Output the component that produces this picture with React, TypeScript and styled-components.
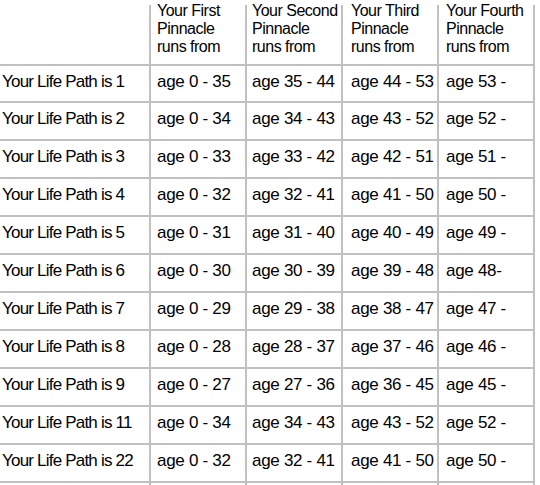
import React from "react";
import styled, { createGlobalStyle } from "styled-components";

const Global = createGlobalStyle`
  html, body {
    margin: 0;
    padding: 0;
    background: #ffffff;
    overflow: hidden;
  }
  body {
    font-family: "Liberation Sans", Arial, sans-serif;
    color: #000;
  }
`;

const LINE = "#c0c0c0";

const Page = styled.div`
  width: 540px;
  height: 485px;
  overflow: hidden;
  padding-top: 5px;
  box-sizing: border-box;
`;

const Row = styled.div<{ $h: number }>`
  display: grid;
  grid-template-columns: 151px repeat(4, 96px);
  height: ${(p) => p.$h}px;
`;

const Cell = styled.div<{ $pad?: number; $noBottom?: boolean }>`
  box-sizing: border-box;
  border-right: 2px solid ${LINE};
  border-bottom: ${(p) => (p.$noBottom ? "none" : `2px solid ${LINE}`)};
  display: flex;
  align-items: center;
  padding-left: ${(p) => p.$pad ?? 6}px;
  padding-bottom: 4px;
  white-space: nowrap;
  overflow: visible;
`;

const HeadCell = styled(Cell)`
  align-items: flex-start;
  padding-bottom: 0;
`;

const HeadText = styled.div`
  margin-top: -3px;
  font-size: 16px;
  line-height: 18px;
  letter-spacing: -0.5px;
`;

const LabelCell = styled(Cell)`
  font-size: 17px;
  letter-spacing: -0.8px;
`;

const AgeCell = styled(Cell)`
  font-size: 17px;
  letter-spacing: -0.3px;
`;

const headers = [
  ["Your First", "Pinnacle", "runs from"],
  ["Your Second", "Pinnacle", "runs from"],
  ["Your Third", "Pinnacle", "runs from"],
  ["Your Fourth", "Pinnacle", "runs from"],
];

const pads = [6, 5, 8, 7];

const rows: [string, string[]][] = [
  ["1", ["age 0 - 35", "age 35 - 44", "age 44 - 53", "age 53 -"]],
  ["2", ["age 0 - 34", "age 34 - 43", "age 43 - 52", "age 52 -"]],
  ["3", ["age 0 - 33", "age 33 - 42", "age 42 - 51", "age 51 -"]],
  ["4", ["age 0 - 32", "age 32 - 41", "age 41 - 50", "age 50 -"]],
  ["5", ["age 0 - 31", "age 31 - 40", "age 40 - 49", "age 49 -"]],
  ["6", ["age 0 - 30", "age 30 - 39", "age 39 - 48", "age 48-"]],
  ["7", ["age 0 - 29", "age 29 - 38", "age 38 - 47", "age 47 -"]],
  ["8", ["age 0 - 28", "age 28 - 37", "age 37 - 46", "age 46 -"]],
  ["9", ["age 0 - 27", "age 27 - 36", "age 36 - 45", "age 45 -"]],
  ["11", ["age 0 - 34", "age 34 - 43", "age 43 - 52", "age 52 -"]],
  ["22", ["age 0 - 32", "age 32 - 41", "age 41 - 50", "age 50 -"]],
];

export default function App() {
  return (
    <>
      <Global />
      <Page>
        <Row $h={61}>
          <HeadCell $pad={2} />
          {headers.map((h, i) => (
            <HeadCell key={i} $pad={pads[i]}>
              <HeadText>
                {h.map((line, j) => (
                  <div key={j}>{line}</div>
                ))}
              </HeadText>
            </HeadCell>
          ))}
        </Row>
        {rows.map(([n, ages], r) => (
          <Row key={n} $h={r === 0 ? 37 : 38}>
            <LabelCell $pad={2}>Your Life Path is {n}</LabelCell>
            {ages.map((a, i) => (
              <AgeCell key={i} $pad={pads[i]}>
                {a}
              </AgeCell>
            ))}
          </Row>
        ))}
        <Row $h={38}>
          <LabelCell $pad={2} $noBottom />
          {pads.map((p, i) => (
            <AgeCell key={i} $pad={p} $noBottom />
          ))}
        </Row>
      </Page>
    </>
  );
}
